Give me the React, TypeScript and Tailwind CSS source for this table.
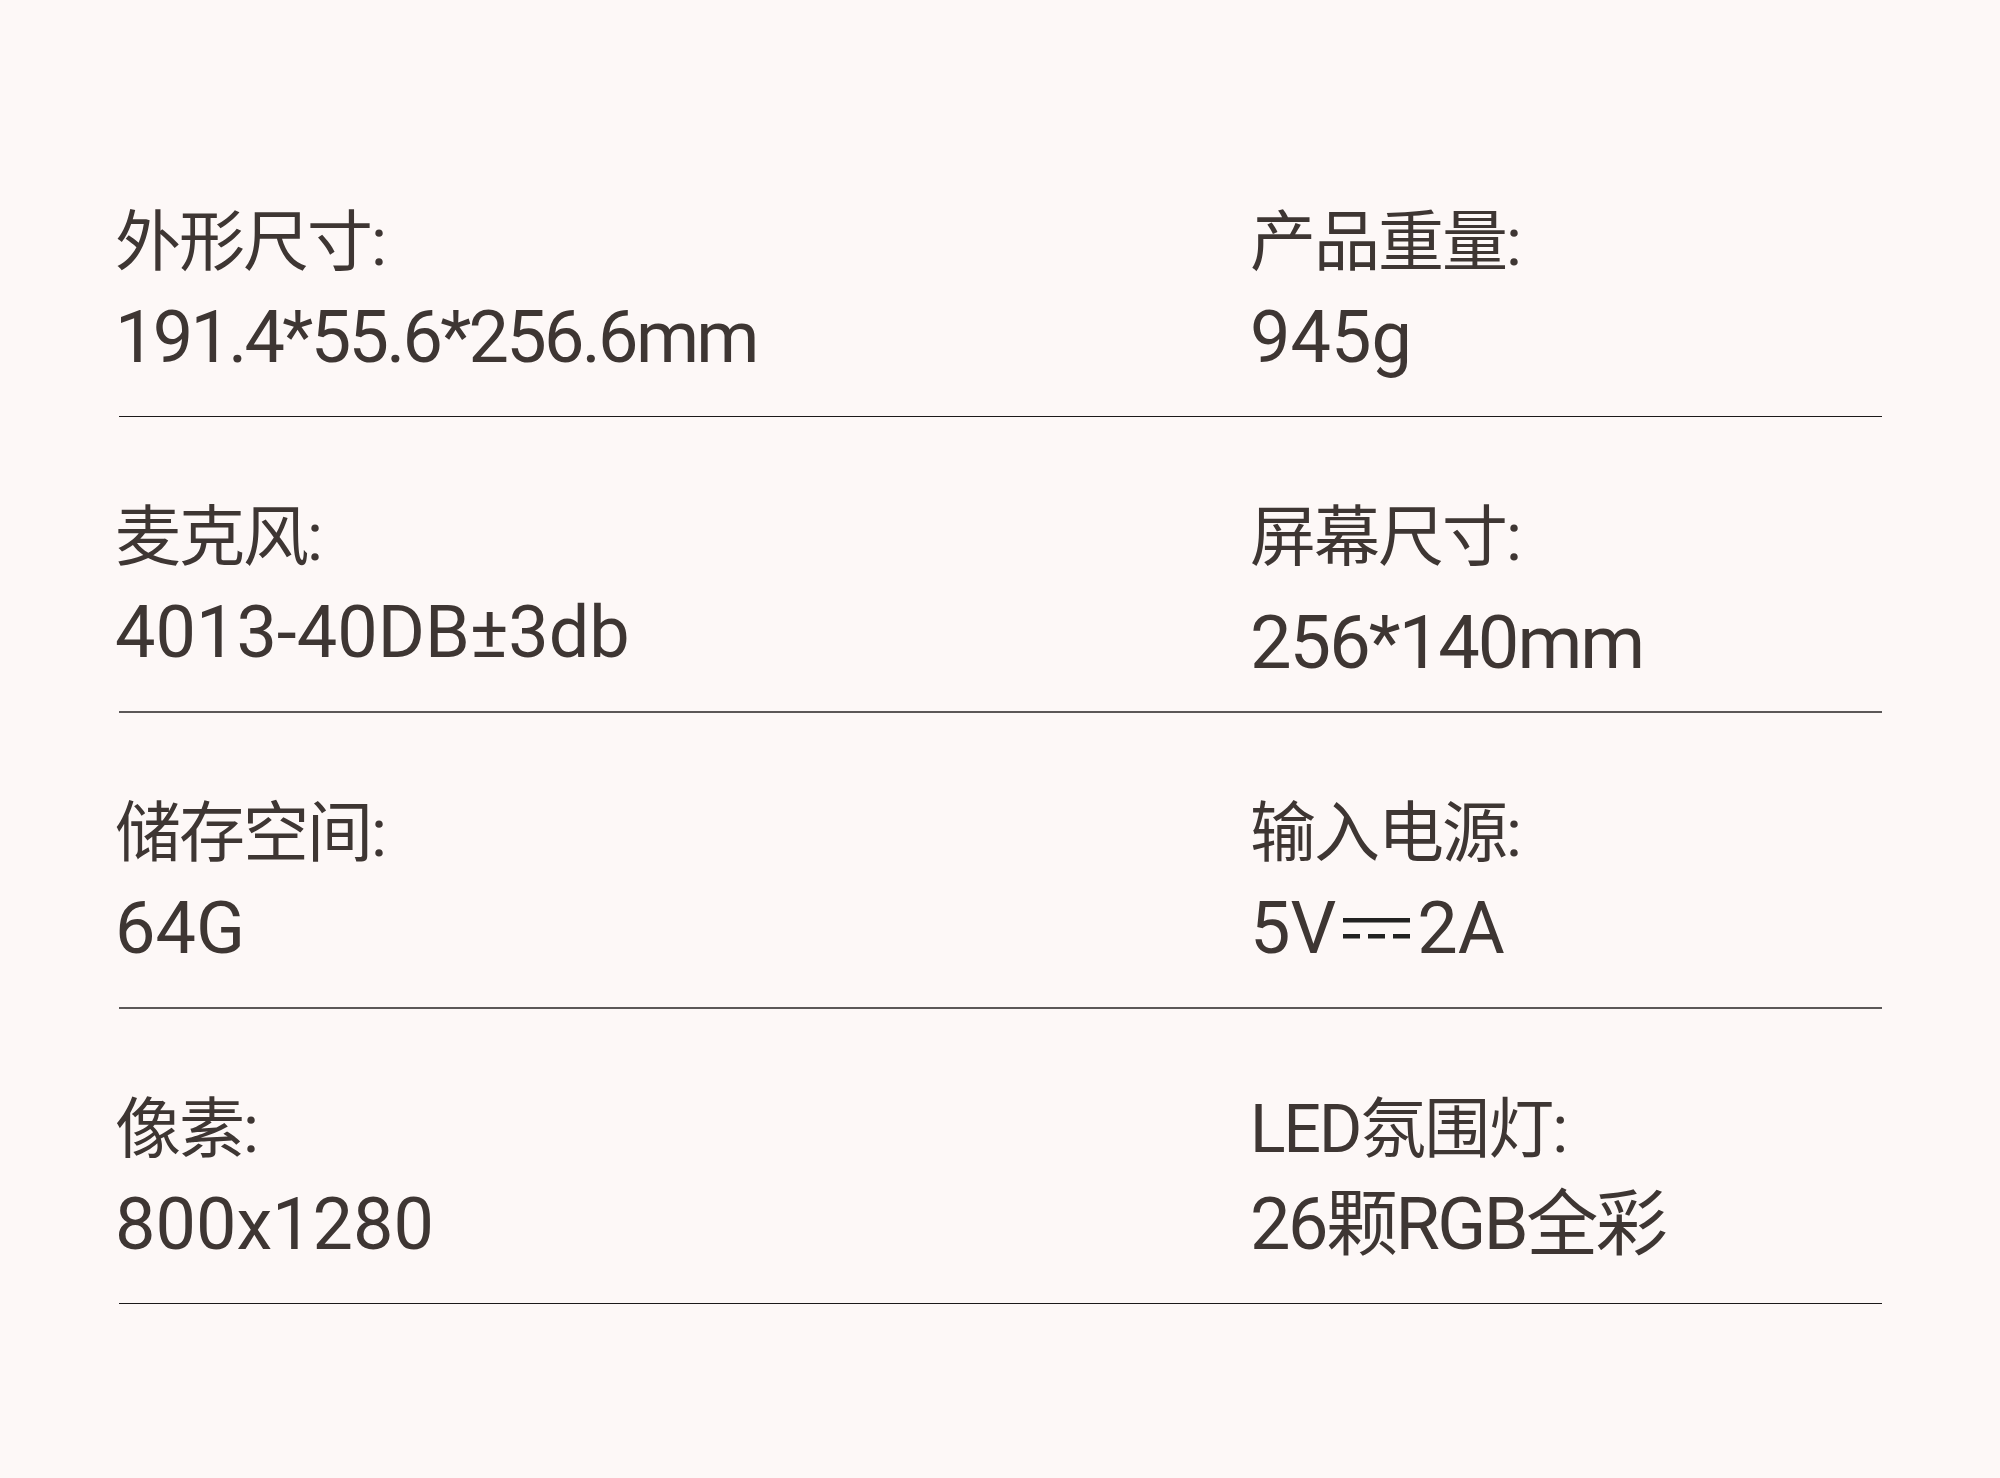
import React from "react";

type Item = { label: string; value: React.ReactNode; vcls?: string };

const DC = () => (
  <svg
    width="67"
    height="22"
    viewBox="0 0 67 22"
    className="inline-block mx-[7px]"
    style={{ verticalAlign: "13px" }}
  >
    <rect x="0" y="0" width="67" height="4.5" fill="#222222" />
    <rect x="0" y="16" width="17" height="4.5" fill="#222222" />
    <rect x="25" y="16" width="17" height="4.5" fill="#222222" />
    <rect x="50" y="16" width="17" height="4.5" fill="#222222" />
  </svg>
);

const rows: { left: Item; right: Item; border: string }[] = [
  {
    left: { label: "外形尺寸:", value: "191.4*55.6*256.6mm", vcls: "tracking-[-2.7px]" },
    right: { label: "产品重量:", value: "945g" },
    border: "border-b border-[#1c1a1a]",
  },
  {
    left: { label: "麦克风:", value: "4013-40DB±3db" },
    right: {
      label: "屏幕尺寸:",
      value: <span className="relative top-[10px] text-[74px]">256*140mm</span>,
      vcls: "tracking-[-2px]",
    },
    border: "border-b-2 border-[#5c5858]",
  },
  {
    left: { label: "储存空间:", value: "64G" },
    right: {
      label: "输入电源:",
      value: (
        <>
          5V
          <DC />
          2A
        </>
      ),
    },
    border: "border-b-2 border-[#5c5858]",
  },
  {
    left: { label: "像素:", value: "800x1280" },
    right: { label: "LED氛围灯:", value: "26颗RGB全彩", vcls: "tracking-[-2.5px]" },
    border: "border-b border-[#1c1a1a]",
  },
];

const Cell = ({ item }: { item: Item }) => (
  <div className="flex flex-col">
    <div className="h-[80px] leading-[80px] text-[66px] tracking-[-2px] whitespace-nowrap">
      {item.label}
    </div>
    <div
      className={`mt-[10px] h-[90px] leading-[90px] text-[72px] whitespace-nowrap ${
        item.vcls ?? "tracking-normal"
      }`}
    >
      {item.value}
    </div>
  </div>
);

export default function App() {
  return (
    <div className="w-[2000px] h-[1478px] bg-[#fdf8f7] text-[#3e3633] font-['Roboto','Noto_Sans_CJK_SC',sans-serif] pt-[122px] overflow-hidden">
      <div className="ml-[119px] w-[1763px] flex flex-col">
        {rows.map((r, i) => (
          <div
            key={i}
            className={`grid grid-cols-[1133px_1fr] pt-[81px] pb-[33px] ${r.border}`}
          >
            <div className="-ml-[4px]">
              <Cell item={r.left} />
            </div>
            <div className="-ml-[2px]">
              <Cell item={r.right} />
            </div>
          </div>
        ))}
      </div>
    </div>
  );
}
